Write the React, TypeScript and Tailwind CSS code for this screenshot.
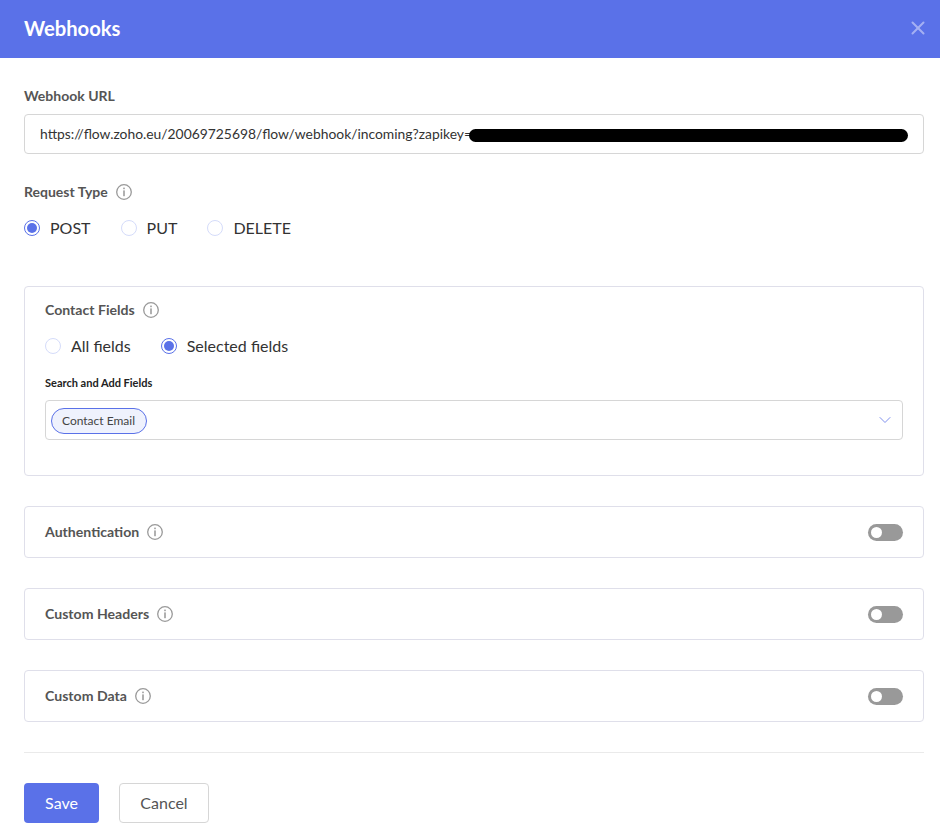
import { X, ChevronDown } from "lucide-react";

function InfoIcon() {
  return (
    <svg width="16" height="16" viewBox="0 0 16 16" fill="none" className="shrink-0">
      <circle cx="8" cy="8" r="7.3" stroke="#999" strokeWidth="1.3" />
      <rect x="7.3" y="3.6" width="1.4" height="1.6" fill="#8f8f8f" />
      <rect x="7.3" y="6.4" width="1.4" height="5.8" fill="#8f8f8f" />
    </svg>
  );
}

function Radio({ label, checked }: { label: string; checked?: boolean }) {
  return (
    <label className="flex items-center gap-[10px]">
      <span
        className={
          checked
            ? "flex h-4 w-4 items-center justify-center rounded-full border border-[#5a71e8] bg-white"
            : "flex h-4 w-4 items-center justify-center rounded-full border border-[#d5dcfa] bg-white"
        }
      >
        {checked && <span className="h-[10px] w-[10px] rounded-full bg-[#5a71e8]" />}
      </span>
      <span className="text-base leading-5 text-[#333]">{label}</span>
    </label>
  );
}

function ToggleRow({ title }: { title: string }) {
  return (
    <div className="flex h-[52px] items-center justify-between rounded-[4px] border border-[#dfdfea] px-5">
      <div className="flex items-center gap-2">
        <span className="text-[14.1px] font-bold text-[#555]">{title}</span>
        <InfoIcon />
      </div>
      <div className="flex h-[17px] w-[35px] items-center rounded-full bg-[#999] pl-[3px]">
        <span className="h-[11px] w-[11px] rounded-full bg-white" />
      </div>
    </div>
  );
}

export default function App() {
  return (
    <div className="h-[840px] w-[940px] overflow-hidden bg-white font-['Lato',sans-serif]">
      <header className="flex h-[58px] items-center justify-between bg-[#5a71e8] pl-6 pr-[11px]">
        <h1 className="-mt-[1px] text-[20.2px] font-bold text-white">Webhooks</h1>
        <X size={22} strokeWidth={2.2} className="-mt-[2px] text-[#a4b0f3]" />
      </header>

      <div className="pl-6 pr-4 pt-[29px]">
        <div className="text-sm leading-[18px] font-bold text-[#555]">Webhook URL</div>
        <div className="relative mt-[9px] flex h-10 items-center rounded-[4px] border border-[#d6d6d6] pl-[15px]">
          <span className="text-[13.87px] text-[#333]">https://flow.zoho.eu/20069725698/flow/webhook/incoming?zapikey=</span>
          <span className="absolute top-[14px] left-[444px] h-[13px] w-[439px] rounded-full bg-black" />
        </div>

        <div className="mt-[29px] flex h-[18px] items-center gap-2">
          <span className="text-sm font-bold text-[#555]">Request Type</span>
          <InfoIcon />
        </div>
        <div className="mt-[17px] flex h-5 items-center gap-[30px]">
          <Radio label="POST" checked />
          <Radio label="PUT" />
          <Radio label="DELETE" />
        </div>

        <section className="mt-[48px] h-[190px] rounded-[4px] border border-[#dfdfea] px-5 pt-[14px]">
          <div className="flex h-[18px] items-center gap-2">
            <span className="text-[14.1px] font-bold text-[#555]">Contact Fields</span>
            <InfoIcon />
          </div>
          <div className="mt-[17px] flex h-5 items-center gap-[30px]">
            <Radio label="All fields" />
            <Radio label="Selected fields" checked />
          </div>
          <div className="mt-[20px] text-[11px] leading-[14px] font-bold text-[#222]">Search and Add Fields</div>
          <div className="mt-[10px] flex h-10 items-center justify-between rounded-[4px] border border-[#d6d6d6] pl-[5px] pr-[7px]">
            <span className="mt-[1px] flex h-[26px] w-[96px] items-center rounded-full border border-[#5a71e8] bg-[#eff2fd] pl-[10px] text-xs text-[#444]">
              Contact Email
            </span>
            <ChevronDown size={20} strokeWidth={1.2} className="text-[#7f90ee]" />
          </div>
        </section>

        <div className="mt-[30px] flex flex-col gap-[30px]">
          <ToggleRow title="Authentication" />
          <ToggleRow title="Custom Headers" />
          <ToggleRow title="Custom Data" />
        </div>

        <div className="mt-[30px] border-t border-[#eaeaea]" />

        <div className="mt-[30px] flex gap-5">
          <button className="h-10 w-[75px] rounded-[4px] bg-[#5a71e8] text-base text-white">Save</button>
          <button className="h-10 w-[90px] rounded-[4px] border border-[#d6d6d6] bg-white text-base text-[#555]">Cancel</button>
        </div>
      </div>
    </div>
  );
}
